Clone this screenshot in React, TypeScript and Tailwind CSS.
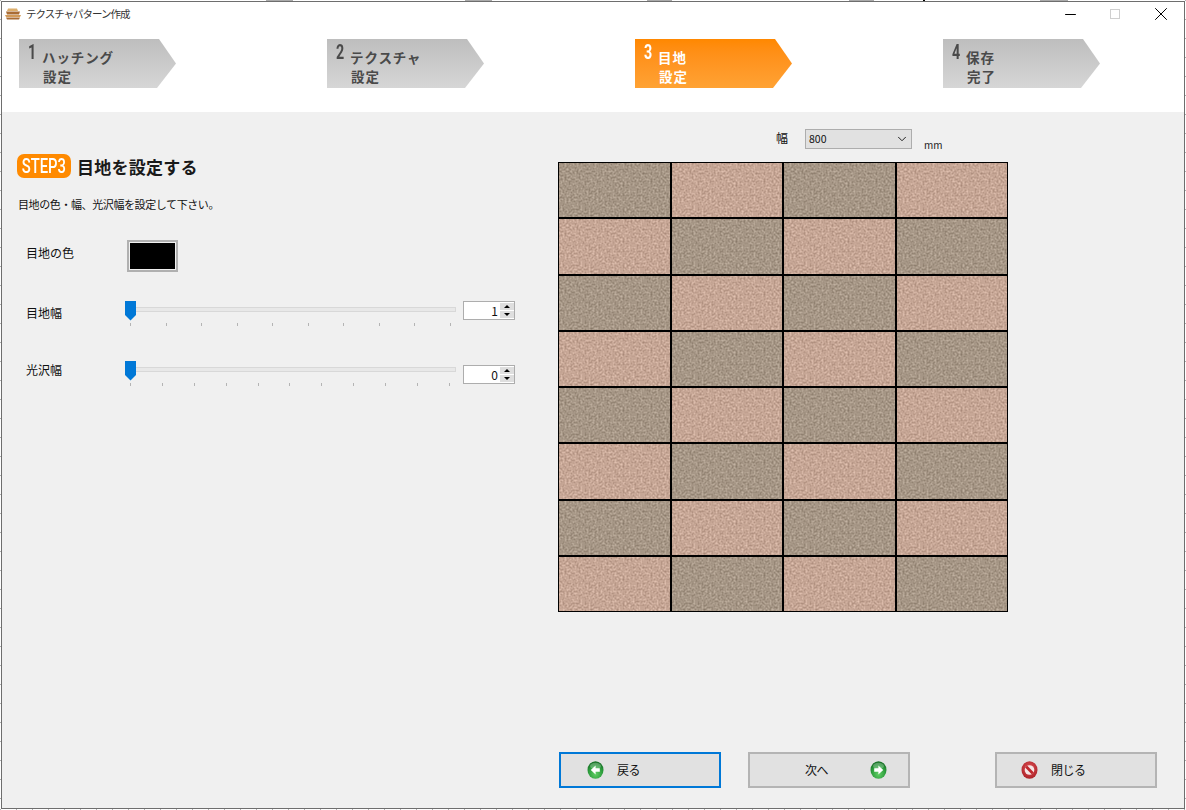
import { useId } from 'react';
import { ChevronDown, Minus, X } from 'lucide-react';

const STEPS = [
  { num: '1', title: 'ハッチング', sub: '設定', active: false },
  { num: '2', title: 'テクスチャ', sub: '設定', active: false },
  { num: '3', title: '目地', sub: '設定', active: true },
  { num: '4', title: '保存', sub: '完了', active: false },
];

function StepArrow({ num, title, sub, active }: { num: string; title: string; sub: string; active: boolean }) {
  return (
    <div className="w-[308px] shrink-0">
      <div
        className={`flex h-[49px] w-[157px] pl-[9px] [clip-path:polygon(0_0,140px_0,157px_50%,138px_100%,0_100%)] ${
          active
            ? 'bg-gradient-to-b from-[#ff8800] to-[#ffa233] text-white'
            : 'bg-gradient-to-b from-[#bebebe] to-[#d6d6d6] text-[#4a4a4a]'
        }`}
      >
        <div className="w-[14px] pt-[1px] font-['Roboto',sans-serif] text-[21px] font-bold leading-[24px]">
          <span className="inline-block origin-left scale-x-[0.68]">{num}</span>
        </div>
        <div className="pt-[9px] text-[13.5px] font-bold leading-[19px] tracking-[0.9px]">
          <div>{title}</div>
          <div className="pl-[1px]">{sub}</div>
        </div>
      </div>
    </div>
  );
}

function Tile({ pink }: { pink: boolean }) {
  const id = useId();
  const base = pink ? [0.775, 0.65, 0.585] : [0.65, 0.59, 0.525];
  const k = 0.34;
  const row = (c: number) => `${k} 0 0 0 ${c - k / 2} `;
  const matrix = `${row(base[0])}${row(base[1])}${row(base[2])}0 0 0 0 1`;
  return (
    <svg className="block h-full w-full">
      <filter id={id} x="0" y="0" width="100%" height="100%" colorInterpolationFilters="sRGB">
        <feTurbulence type="fractalNoise" baseFrequency="0.5" numOctaves={2} seed={4} />
        <feColorMatrix type="matrix" values={matrix} />
      </filter>
      <rect width="100%" height="100%" filter={`url(#${id})`} />
    </svg>
  );
}

function SliderRow({
  label,
  value,
  ticks,
  labelClass,
  spinClass,
  ticksClass,
}: {
  label: string;
  value: string;
  ticks: number;
  labelClass: string;
  spinClass: string;
  ticksClass: string;
}) {
  return (
    <div className="flex h-[26px] items-start">
      <div className={`w-[98px] text-[12px] leading-[16px] text-[#111] ${labelClass}`}>{label}</div>
      <div className="relative h-[26px] w-[331px]">
        <div className="ml-[5px] mt-[6px] h-[5px] border border-[#d8d8d8] bg-[#e8e8e8]" />
        <svg className="absolute left-0 top-0" width="11" height="20" viewBox="0 0 11 20">
          <path d="M0 0H11V14L5.5 19.5L0 14Z" fill="#0078d7" />
        </svg>
        <div className={`ml-[5px] mt-[11px] flex justify-between ${ticksClass}`}>
          {Array.from({ length: ticks }).map((_, i) => (
            <div key={i} className="h-[3px] w-px bg-[#b4b4b4]" />
          ))}
        </div>
      </div>
      <div className={`ml-[7px] flex h-[19px] w-[52px] border border-[#adadad] bg-white ${spinClass}`}>
        <div className="flex-1 pr-[2px] text-right text-[12px] leading-[17px] text-[#111]">{value}</div>
        <div className="flex w-[14px] flex-col gap-px py-px">
          <div className="flex flex-1 items-center justify-center bg-[#dedede]">
            <div className="h-0 w-0 border-x-[3px] border-b-[3px] border-x-transparent border-b-black" />
          </div>
          <div className="flex flex-1 items-center justify-center bg-[#dedede]">
            <div className="h-0 w-0 border-x-[3px] border-t-[3px] border-x-transparent border-t-black" />
          </div>
        </div>
      </div>
    </div>
  );
}

function GreenArrow({ dir }: { dir: 'left' | 'right' }) {
  const id = useId();
  return (
    <svg width="17" height="18" viewBox="0 0 17 18" className="shrink-0">
      <defs>
        <radialGradient id={id} cx="50%" cy="72%" r="65%">
          <stop offset="0%" stopColor="#62d066" />
          <stop offset="70%" stopColor="#2a9a3a" />
          <stop offset="100%" stopColor="#1a7429" />
        </radialGradient>
      </defs>
      <ellipse cx="8.5" cy="9" rx="8" ry="8.8" fill={`url(#${id})`} />
      <ellipse cx="8.5" cy="5" rx="5.5" ry="3.2" fill="#ffffff" opacity="0.25" />
      <g transform={dir === 'right' ? 'matrix(-1 0 0 1 17 0)' : undefined}>
        <path d="M3.8 9L8.6 4.6V7.3H12.8V10.7H8.6V13.4Z" fill="#ffffff" />
      </g>
    </svg>
  );
}

function StopIcon() {
  const id = useId();
  return (
    <svg width="17" height="18" viewBox="0 0 17 18" className="shrink-0">
      <defs>
        <radialGradient id={id} cx="50%" cy="40%" r="65%">
          <stop offset="0%" stopColor="#e2555a" />
          <stop offset="100%" stopColor="#a81e24" />
        </radialGradient>
      </defs>
      <ellipse cx="8.5" cy="9" rx="8" ry="8.8" fill={`url(#${id})`} />
      <circle cx="8.5" cy="9" r="4.8" fill="#f6e6e6" />
      <path d="M5.1 5.6L11.9 12.4" stroke="#c0282e" strokeWidth="2.8" />
    </svg>
  );
}

export default function App() {
  return (
    <div className="relative h-[810px] w-[1186px] overflow-hidden bg-white p-px font-['Noto_Sans_CJK_JP',sans-serif]">
      {/* bits of the drawing behind the window */}
      <div className="absolute left-0 top-0 h-full w-px bg-[repeating-linear-gradient(to_bottom,#b0b0b0_0,#b0b0b0_1px,transparent_1px,transparent_19px)]" />
      <div className="absolute right-0 top-0 h-full w-px bg-[repeating-linear-gradient(to_bottom,#b0b0b0_0,#b0b0b0_1px,transparent_1px,transparent_19px)]" />
      <div className="absolute bottom-0 left-0 h-px w-full bg-[repeating-linear-gradient(to_right,#b0b0b0_0,#b0b0b0_1px,transparent_1px,transparent_16px)]" />
      <div className="absolute left-[266px] top-0 h-px w-[27px] bg-[#aaa]" />
      <div className="absolute left-[465px] top-0 h-px w-[27px] bg-[#aaa]" />
      <div className="absolute left-[647px] top-0 h-px w-[25px] bg-[#aaa]" />
      <div className="absolute left-[849px] top-0 h-px w-[25px] bg-[#aaa]" />
      <div className="absolute left-[923px] top-0 h-[2px] w-[2px] bg-black" />
      <div className="absolute left-[1040px] top-0 h-px w-[28px] bg-[#aaa]" />

      <div className="relative flex h-[808px] w-[1184px] flex-col border border-[#6e6e6e]">
        {/* title bar */}
        <div className="flex h-[24px] shrink-0 items-center bg-white pl-[3px]">
          <svg width="16" height="12" viewBox="0 0 16 12" className="shrink-0">
            <path d="M3 0.5H12L13 3H2Z" fill="#dcae6c" />
            <path d="M1 3.5H15L14 6.5H2Z" fill="#a96c34" />
            <path d="M0 7H16L15 9H1Z" fill="#d29a58" />
            <path d="M1 9.5H15L14 11.5H2Z" fill="#a96c34" />
          </svg>
          <span className="ml-[5px] text-[10.5px] leading-[14px] tracking-[-1px] text-[#333]">テクスチャパターン作成</span>
          <div className="ml-auto flex items-center">
            <Minus size={17} strokeWidth={1} absoluteStrokeWidth className="text-black" />
            <div className="ml-[31px] h-[10px] w-[10px] border border-[#cfcfcf]" />
            <X size={22} strokeWidth={1} absoluteStrokeWidth className="ml-[30px] mr-[12px] text-black" />
          </div>
        </div>

        {/* wizard steps */}
        <div className="flex h-[86px] shrink-0 bg-white pl-[17px] pt-[13px]">
          {STEPS.map((s) => (
            <StepArrow key={s.num} {...s} />
          ))}
        </div>

        {/* body */}
        <div className="flex flex-1 flex-col bg-[#f0f0f0]">
          <div className="flex">
            <div className="w-[556px] shrink-0">
              <div className="ml-[15px] mt-[42px] flex h-[24px] items-center">
                <div className="flex h-[24px] w-[54px] items-center justify-center rounded-[7px] bg-[#ff8a00] font-['Roboto',sans-serif] text-[20px] font-medium text-white">
                  <span className="inline-block scale-x-[0.74]">STEP3</span>
                </div>
                <div className="ml-[6px] pt-[1px] text-[17px] font-bold leading-[24px] tracking-[0.25px] text-[#1a1a1a]">目地を設定する</div>
              </div>
              <div className="ml-[16px] mt-[18px] text-[11px] leading-[16px] tracking-[-0.4px] text-[#111]">
                目地の色・幅、光沢幅を設定して下さい。
              </div>
              <div className="ml-[24px] mt-[28px] flex h-[32px] items-start">
                <div className="w-[101px] pt-[5px] text-[12px] leading-[16px] text-[#111]">目地の色</div>
                <div className="h-[32px] w-[51px] border-2 border-[#b0b0b0] bg-[#f0f0f0] p-px">
                  <div className="h-full w-full bg-black" />
                </div>
              </div>
              <div className="ml-[24px] mt-[29px]">
                <SliderRow label="目地幅" value="1" ticks={10} labelClass="pt-[4px] w-[99px]" spinClass="" ticksClass="mr-[5px]" />
              </div>
              <div className="ml-[24px] mt-[34px]">
                <SliderRow label="光沢幅" value="0" ticks={11} labelClass="pt-[1px] w-[99px]" spinClass="mt-[4px]" ticksClass="mr-[6px]" />
              </div>
            </div>

            <div className="shrink-0">
              <div className="mt-[17px] flex h-[20px] items-start">
                <div className="ml-[218px] w-[29px] text-[12px] leading-[18px] text-[#111]">幅</div>
                <div className="flex h-[20px] w-[107px] items-center border border-[#adadad] bg-[#e1e1e1] pl-[3px] pr-[2px] text-[10.5px] text-[#111]">
                  <span>800</span>
                  <ChevronDown size={14} strokeWidth={1} absoluteStrokeWidth className="ml-auto text-[#222]" />
                </div>
                <div className="ml-[12px] mt-[9px] text-[10px] leading-[14px] text-[#222]">mm</div>
              </div>
              <div className="mt-[13px] grid h-[450px] w-[450px] grid-cols-4 grid-rows-8 gap-[2px] bg-black p-px">
                {Array.from({ length: 32 }).map((_, i) => {
                  const r = Math.floor(i / 4);
                  const c = i % 4;
                  return <Tile key={i} pink={(r + c) % 2 === 1} />;
                })}
              </div>
            </div>
          </div>

          {/* bottom buttons */}
          <div className="mt-auto mb-[20px] flex h-[36px] pl-[557px] text-[12px] text-[#111]">
            <div className="flex w-[162px] items-center border-2 border-[#0078d7] bg-[#e1e1e1] pl-[26px]">
              <GreenArrow dir="left" />
              <span className="ml-[13px] tracking-[-0.5px]">戻る</span>
            </div>
            <div className="ml-[27px] flex w-[162px] items-center border-2 border-[#b4b4b4] bg-[#e1e1e1] pl-[55px]">
              <span className="tracking-[-0.5px]">次へ</span>
              <span className="ml-[42px] flex"><GreenArrow dir="right" /></span>
            </div>
            <div className="ml-[85px] flex w-[162px] items-center border-2 border-[#b4b4b4] bg-[#e1e1e1] pl-[24px]">
              <StopIcon />
              <span className="ml-[13px] tracking-[-0.5px]">閉じる</span>
            </div>
          </div>
        </div>
      </div>
    </div>
  );
}
